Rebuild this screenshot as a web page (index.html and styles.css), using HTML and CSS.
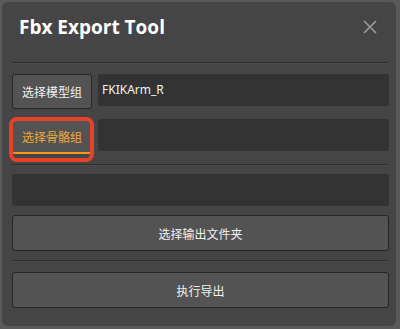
FILE: index.html
```html
<!DOCTYPE html>
<html>
<head>
<meta charset="utf-8">
<link rel="stylesheet" href="styles.css">
</head>
<body>
<div class="window">
  <div class="header">
    <div class="title">Fbx Export Tool</div>
    <svg class="close" width="14" height="14" viewBox="0 0 14 14"><path d="M1 1L13 13M13 1L1 13" stroke="#9a9a9a" stroke-width="1.7" fill="none"/></svg>
  </div>
  <div class="divider"></div>
  <div class="content">
    <div class="row">
      <button class="btn small">选择模型组</button>
      <div class="field">FKIKArm_R</div>
    </div>
    <div class="row">
      <div class="mark">
        <button class="btn small active">选择骨骼组</button>
      </div>
      <div class="field"></div>
    </div>
    <div class="divider inner"></div>
    <div class="field wide"></div>
    <button class="btn wide-btn">选择输出文件夹</button>
    <div class="divider inner second"></div>
    <button class="btn wide-btn last">执行导出</button>
  </div>
</div>
</body>
</html>
```
FILE: styles.css
```css
html, body {
  margin: 0;
  padding: 0;
}
body {
  width: 400px;
  height: 329px;
  background: #5a5a5a;
  overflow: hidden;
  font-family: "Noto Sans", "Noto Sans CJK SC", sans-serif;
}
.window {
  margin: 2px 0 0 2px;
  width: 394px;
  height: 324px;
  background: #454545;
  border-radius: 6px;
  box-sizing: border-box;
}
.header {
  height: 60px;
  display: flex;
  justify-content: space-between;
  align-items: flex-start;
  padding: 13px 19px 0 17px;
  box-sizing: border-box;
}
.title {
  font-family: "Open Sans", sans-serif;
  font-weight: 700;
  font-size: 19px;
  color: #fff;
  line-height: 24px;
}
.close {
  margin-top: 5px;
}
.divider {
  height: 1px;
  background: #2f2f2f;
  border-bottom: 1px solid #4b4b4b;
  margin: 0 7px 0 9px;
}
.content {
  padding: 10px 7px 0 10px;
  display: flex;
  flex-direction: column;
}
.row {
  display: flex;
  align-items: flex-start;
  gap: 6px;
  margin-bottom: 10px;
}
.btn {
  display: block;
  background: #535353;
  border: 1px solid #262626;
  border-radius: 3px;
  color: #f2f2f2;
  font-family: "Noto Sans CJK SC", sans-serif;
  font-size: 12px;
  padding: 0;
  box-sizing: border-box;
}
.small {
  width: 80px;
  height: 35px;
}
.active {
  color: #f4a63a;
  border-bottom: 2px solid #f29a1e;
}
.mark {
  position: relative;
  display: flex;
}
.mark::after {
  content: "";
  position: absolute;
  top: -2px;
  left: -3px;
  right: -2px;
  bottom: -8px;
  border: 4px solid #e5412b;
  border-radius: 8px;
}
.field {
  flex: 1;
  height: 32px;
  background: #333333;
  border-radius: 2px;
  color: #f2f2f2;
  font-family: "Noto Sans", sans-serif;
  font-size: 12px;
  line-height: 32px;
  padding-left: 4px;
  box-sizing: border-box;
}
.divider.inner {
  margin: 0 0 8px -1px;
}
.divider.inner.second {
  margin-bottom: 9px;
}
.field.wide {
  flex: none;
  margin-bottom: 9px;
}
.wide-btn {
  height: 36px;
  width: 100%;
  margin-bottom: 9px;
}
.wide-btn.last {
  margin-top: 1px;
}
```
